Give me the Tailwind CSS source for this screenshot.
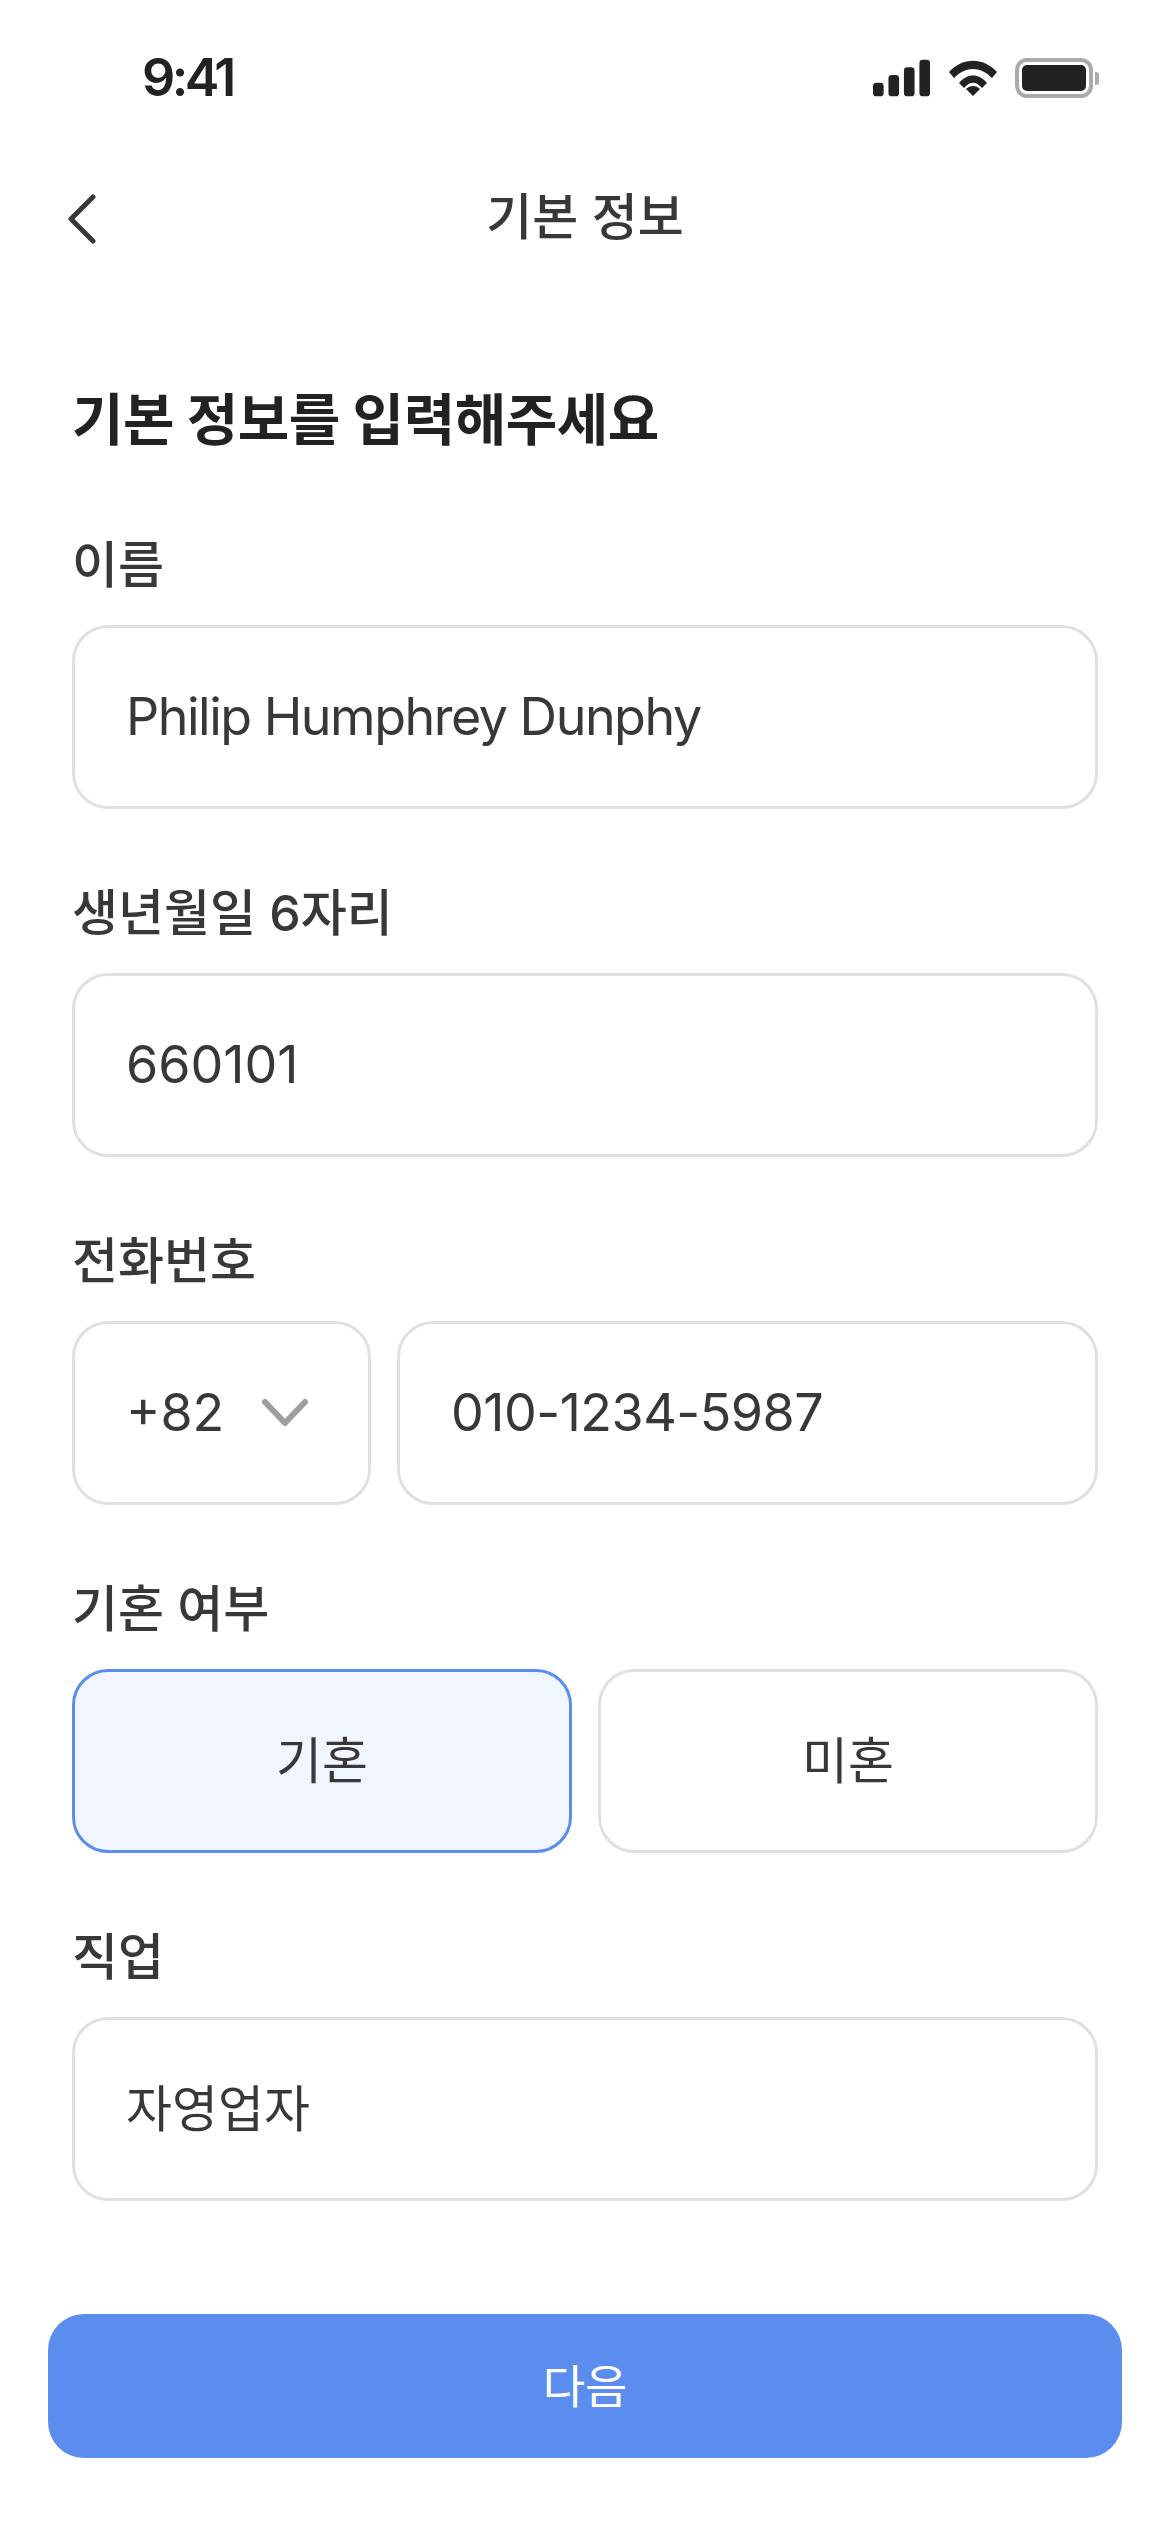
<!DOCTYPE html>
<html lang="ko">
<head>
    <meta charset="UTF-8">
    <meta name="viewport" content="width=device-width, initial-scale=1.0">
    <title>기본 정보</title>
    <script src="https://cdn.jsdelivr.net/npm/@tailwindcss/browser@4"></script>
</head>
<body class="bg-white text-[#383838] font-['Inter','Noto_Sans_CJK_KR',sans-serif]">
    <div class="w-[1170px] h-[2532px] flex flex-col">
        <!-- status bar -->
        <div class="h-[154px] pt-[2px] pl-[142px] pr-[71px] flex items-center justify-between">
            <span class="text-[52px] font-semibold text-[#222] tracking-[-3.5px]">9:41</span>
            <div class="flex items-center gap-[18px]">
                <svg class="w-[58px] h-[38px]" viewBox="0 0 60 38" fill="#222">
                    <rect x="0" y="24" width="11" height="14" rx="3.5"/>
                    <rect x="16" y="16" width="11" height="22" rx="3.5"/>
                    <rect x="32" y="8" width="11" height="30" rx="3.5"/>
                    <rect x="48" y="0" width="11" height="38" rx="3.5"/>
                </svg>
                <svg class="w-[48px] h-[36px]" viewBox="0 0 48 36" fill="#222">
                    <path d="M0 12 C14 -3 34 -3 48 12 L43 18 C31 6 17 6 5 18 Z"/>
                    <path d="M10 23 C18 13 30 13 38 23 L33 28 C27 21 21 21 15 28 Z"/>
                    <path d="M17 29 C21 25 27 25 31 29 L24 36 Z"/>
                </svg>
                <div class="flex items-center gap-[2px]">
                    <div class="w-[78px] h-[40px] rounded-[12px] border-[4px] border-[#aaa] p-[3px]">
                        <div class="w-full h-full rounded-[5px] bg-[#222]"></div>
                    </div>
                    <div class="w-[4px] h-[13px] rounded-r-[3px] bg-[#aaa]"></div>
                </div>
            </div>
        </div>

        <!-- nav -->
        <div class="relative h-[124px] pt-[2px] flex items-center justify-center">
            <svg class="absolute left-[66px] top-[40px] w-[30px] h-[50px]" viewBox="0 0 30 50" fill="none" stroke="#383838" stroke-width="5" stroke-linecap="round" stroke-linejoin="round">
                <path d="M27 3 L5 25 L27 47"/>
            </svg>
            <span class="text-[50px] font-medium">기본 정보</span>
        </div>

        <!-- form -->
        <div class="px-[72px] pt-[110px] flex flex-col">
            <h1 class="text-[56px] leading-[64px] font-bold text-[#222] tracking-[-0.5px] mb-[84px]">기본 정보를 입력해주세요</h1>

            <label class="h-[58px] mb-[31px] flex items-center text-[50px] font-medium">이름</label>
            <div class="h-[184px] mb-[75px] px-[51px] flex items-center border-[3px] border-[#e0e0e0] rounded-[36px] text-[52px] tracking-[-1.5px]">Philip Humphrey Dunphy</div>

            <label class="h-[58px] mb-[31px] flex items-center text-[50px] font-medium">생년월일 6자리</label>
            <div class="h-[184px] mb-[75px] px-[51px] flex items-center border-[3px] border-[#e0e0e0] rounded-[36px] text-[52px]">660101</div>

            <label class="h-[58px] mb-[31px] flex items-center text-[50px] font-medium">전화번호</label>
            <div class="flex gap-[26px] mb-[75px]">
                <div class="w-[299px] h-[184px] pl-[51px] pr-[60px] flex items-center justify-between border-[3px] border-[#e0e0e0] rounded-[36px] text-[52px]">
                    <span>+82</span>
                    <svg class="w-[46px] h-[30px]" viewBox="0 0 46 30" fill="none" stroke="#9e9e9e" stroke-width="6" stroke-linecap="round" stroke-linejoin="round">
                        <path d="M3 4 L23 25 L43 4"/>
                    </svg>
                </div>
                <div class="flex-1 h-[184px] px-[51px] flex items-center border-[3px] border-[#e0e0e0] rounded-[36px] text-[52px] tracking-[-0.5px]">010-1234-5987</div>
            </div>

            <label class="h-[58px] mb-[31px] flex items-center text-[50px] font-medium">기혼 여부</label>
            <div class="grid grid-cols-2 gap-[26px] mb-[75px]">
                <div class="h-[184px] flex items-center justify-center border-[3px] border-[#5b8def] bg-[#f0f5ff] rounded-[36px] text-[50px]">기혼</div>
                <div class="h-[184px] flex items-center justify-center border-[3px] border-[#e0e0e0] rounded-[36px] text-[50px]">미혼</div>
            </div>

            <label class="h-[58px] mb-[31px] flex items-center text-[50px] font-medium">직업</label>
            <div class="h-[184px] px-[51px] flex items-center border-[3px] border-[#e0e0e0] rounded-[36px] text-[50px]">자영업자</div>
        </div>

        <!-- next button -->
        <div class="px-[48px] pt-[113px]">
            <button class="w-full h-[144px] bg-[#5b8def] rounded-[36px] text-white text-[46px]">다음</button>
        </div>
    </div>
</body>
</html>
